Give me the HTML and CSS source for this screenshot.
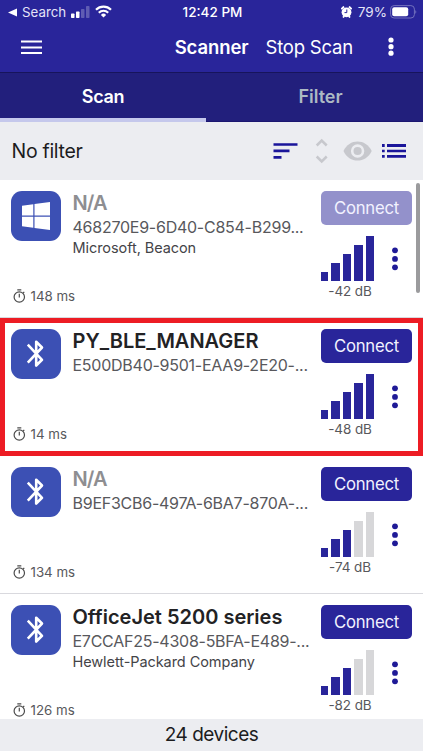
FILE: index.html
```html
<!DOCTYPE html>
<html lang="en">
<head>
<meta charset="utf-8">
<title>Scanner</title>
<link rel="stylesheet" href="styles.css">
</head>
<body>
<svg class="defs" width="0" height="0">
  <symbol id="bt" viewBox="0 0 50 50"><path d="M16.800 15.700 31 30.800 25.200 36.500V12.800L31 18.500 16.800 33.700" fill="none" stroke="#fff" stroke-width="2.600" stroke-linejoin="round"/></symbol>
  <symbol id="win" viewBox="0 0 50 50"><path d="M11 14.700 22.300 13.200V24.500H11ZM23.500 13 39 11V24.500H23.500ZM11 25.700H22.300V36.800L11 35.200ZM23.500 25.700H39V39L23.500 37Z" fill="#fff"/></symbol>
  <symbol id="timer" viewBox="0 0 13 14"><g fill="none" stroke="#4c4c4c" stroke-width="1.200"><circle cx="6.300" cy="8" r="5.200"/><path d="M4.300.9h4M6.300 4.800v3.700M10 4.200l1.300-1.300"/></g></symbol>
  <symbol id="dots" viewBox="0 0 6 24"><circle cx="3" cy="3.300" r="2.900"/><circle cx="3" cy="11.900" r="2.900"/><circle cx="3" cy="20.300" r="2.900"/></symbol>
</svg>
<div class="app">
  <header class="top">
    <div class="status">
      <div class="status-left">
        <svg width="9" height="9" viewBox="0 0 9 9"><path d="M0 4.500 9 .5v8Z" fill="#fff"/></svg>
        <span class="back">Search</span>
        <svg class="cell" width="19" height="12" viewBox="0 0 19 12" fill="#fff"><rect y="7.500" width="3.500" height="4.500" rx=".7"/><rect x="5" y="5.500" width="3.500" height="6.500" rx=".7"/><g opacity=".25"><rect x="10" y="3" width="3.500" height="9" rx=".7"/><rect x="15" width="3.500" height="12" rx=".7"/></g></svg>
        <svg class="wifi" width="17" height="13" viewBox="0 0 17 13"><g fill="none" stroke="#fff" stroke-width="2.200"><path d="M1 4.700a10.700 10.700 0 0 1 15 0M3.800 7.700a6.700 6.700 0 0 1 9.400 0"/></g><path d="M8.500 12.500 5.900 9.900a3.700 3.700 0 0 1 5.200 0Z" fill="#fff"/></svg>
      </div>
      <span class="time">12:42 PM</span>
      <div class="status-right">
        <svg width="11" height="12" viewBox="0 0 11 12"><path d="M.3 3.200 3 .5M10.700 3.200 8 .5M2 11.500l1.300-1.500M9 11.500 7.700 10" stroke="#fff" stroke-width="1.800"/><circle cx="5.500" cy="6.300" r="4.900" fill="#fff"/><path d="M5.800 3.500v3.100H3.500" fill="none" stroke="#29259a"/></svg>
        <span class="pct">79%</span>
        <svg width="27" height="14" viewBox="0 0 27 14"><rect x=".6" y=".6" width="23.800" height="12.400" rx="3.500" fill="none" stroke="#7371bd"/><rect x="2.200" y="2.300" width="16" height="9" rx="2" fill="#fff"/><path d="M25.500 4.700q1.500 2.100 0 4.200Z" fill="#8d8bcd"/></svg>
      </div>
    </div>
    <nav class="nav">
      <svg class="menu" width="21" height="15" viewBox="0 0 21 15" fill="#fff"><path d="M0 .5h21v2H0zM0 6.500h21v2H0zM0 12h21v2H0z"/></svg>
      <span class="title">Scanner</span>
      <span class="stop">Stop Scan</span>
      <svg class="nav-dots" width="6" height="20" viewBox="0 0 6 20" fill="#fff"><circle cx="3" cy="3" r="2.600"/><circle cx="3" cy="9.700" r="2.600"/><circle cx="3" cy="16.200" r="2.600"/></svg>
    </nav>
  </header>
  <div class="tabs"><div class="tab active"><span class="t-scan">Scan</span></div><div class="tab muted"><span class="t-filter">Filter</span></div></div>
  <div class="filterbar">
    <span class="nofilter">No filter</span>
    <svg width="134" height="26" viewBox="0 0 134 26">
      <path d="M.5 5.200h24v2.600H.5zM.5 11.600h16v2.600H.5zM.5 18.100h8v2.600H.5z" fill="#1a159a"/>
      <path d="m43.700 7.500 5-5 5 5M43.700 18.500l5 5 5-5" fill="none" stroke="#c7c8cd" stroke-width="2.500"/>
      <path d="M70.500 13C76 .2 93 .2 98.700 13 93 25.800 76 25.800 70.500 13Z" fill="#c7c8cd"/><circle cx="84.600" cy="13" r="5.400" fill="none" stroke="#ecedf1" stroke-width="2.600"/>
      <path d="M109 6h2.700v3H109zM109 11.700h2.700v2.600H109zM109 17h2.700v2.700H109zM114 6h19v3h-19zM114 11.700h19v2.600h-19zM114 17h19v2.700h-19z" fill="#1a159a"/>
    </svg>
  </div>
  <main class="list">
    <article class="row">
      <svg class="tile"><use href="#win"/></svg>
      <div class="info"><h2 class="name na">N/A</h2><p class="uid">468270E9-6D40-C854-B299...</p><p class="vendor">Microsoft, Beacon</p></div>
      <div class="side"><button class="connect off">Connect</button><div class="signal"><div class="meter"><div class="bars"><i></i><i></i><i></i><i></i><i></i></div><span class="db">-42 dB</span></div><svg class="more"><use href="#dots"/></svg></div></div>
      <div class="age"><svg width="13" height="14"><use href="#timer"/></svg><span>148 ms</span></div>
    </article>
    <article class="row marked">
      <svg class="tile"><use href="#bt"/></svg>
      <div class="info"><h2 class="name">PY_BLE_MANAGER</h2><p class="uid">E500DB40-9501-EAA9-2E20-...</p></div>
      <div class="side"><button class="connect">Connect</button><div class="signal"><div class="meter"><div class="bars"><i></i><i></i><i></i><i></i><i></i></div><span class="db">-48 dB</span></div><svg class="more"><use href="#dots"/></svg></div></div>
      <div class="age"><svg width="13" height="14"><use href="#timer"/></svg><span>14 ms</span></div>
    </article>
    <article class="row">
      <svg class="tile"><use href="#bt"/></svg>
      <div class="info"><h2 class="name na">N/A</h2><p class="uid">B9EF3CB6-497A-6BA7-870A-...</p></div>
      <div class="side"><button class="connect">Connect</button><div class="signal"><div class="meter"><div class="bars weak"><i></i><i></i><i></i><i></i><i></i></div><span class="db">-74 dB</span></div><svg class="more"><use href="#dots"/></svg></div></div>
      <div class="age"><svg width="13" height="14"><use href="#timer"/></svg><span>134 ms</span></div>
    </article>
    <article class="row">
      <svg class="tile"><use href="#bt"/></svg>
      <div class="info"><h2 class="name">OfficeJet 5200 series</h2><p class="uid">E7CCAF25-4308-5BFA-E489-...</p><p class="vendor">Hewlett-Packard Company</p></div>
      <div class="side"><button class="connect">Connect</button><div class="signal"><div class="meter"><div class="bars weak"><i></i><i></i><i></i><i></i><i></i></div><span class="db">-82 dB</span></div><svg class="more"><use href="#dots"/></svg></div></div>
      <div class="age"><svg width="13" height="14"><use href="#timer"/></svg><span>126 ms</span></div>
    </article>
    <div class="scrollbar"></div>
  </main>
  <footer class="footer"><span>24 devices</span></footer>
</div>
</body>
</html>
```
FILE: styles.css
```css
* { box-sizing: border-box; margin: 0; padding: 0; }
body { font-family: Inter, "Liberation Sans", sans-serif; background: #fff; color: #1c1c1e; }
svg { display: block; flex: none; }
span, h2, p { white-space: nowrap; }
.defs { position: absolute; }
.app { width: 423px; height: 751px; overflow: hidden; display: flex; flex-direction: column; }
.top { height: 72px; flex: none; background: #29259a; color: #fff; }
.status { height: 24px; display: grid; grid-template-columns: 1fr auto 1fr; align-items: center; padding: 0 6px 0 8px; font-size: 14px; line-height: 24px; }
.status-left, .status-right { display: flex; align-items: center; }
.status-right { justify-content: flex-end; }
.back { margin-left: 5px; width: 44px; font-size: 13.300px; color: #e4e4f8; }
.cell { margin-left: 5px; margin-top: -1px; }
.wifi { margin-left: 5px; margin-top: -1px; }
.time { font-weight: 500; font-size: 13.500px; }
.pct { margin: 0 3px 0 6px; font-size: 13.500px; color: #e4e4f8; }
.nav { height: 48px; display: flex; align-items: center; padding: 0 29px 2px 21px; font-size: 18.500px; }
.title { margin-left: auto; font-weight: 600; letter-spacing: -.1px; }
.stop { margin-left: 17px; letter-spacing: -.2px; }
.nav-dots { margin-left: 35px; }
.tabs { height: 50px; flex: none; display: flex; border-top: 1px solid #17145c; background: #221f7c; color: #fff; font-size: 18px; font-weight: 600; }
.tab { width: 217px; display: flex; justify-content: center; line-height: 48px; border-bottom: 1px solid #1b1670; }
.active { width: 206px; border-bottom: 4px solid #c5c8ec; }
.t-scan { letter-spacing: -.3px; }
.muted { color: #adb9c4; padding-right: 0; flex: 1; padding-left: 12px; }
.filterbar { height: 58px; flex: none; display: flex; align-items: center; justify-content: space-between; padding: 0 16px 0 11.500px; background: #ecedf1; font-size: 19.500px; }
.nofilter { letter-spacing: -.3px; }
.list { height: 539px; flex: none; overflow: hidden; position: relative; }
.row { height: 138px; display: grid; grid-template-columns: 50px 1fr 91px; grid-template-rows: 100px 27px; column-gap: 11px; padding: 11px 11px 0; border-bottom: 1px solid #d9d9de; }
.marked { padding: 6px 6px 0; border: 5px solid #ed1c24; }
.tile { width: 50px; height: 50px; border-radius: 11px; background: #3c50b4; }
.info { min-width: 0; padding: 1px 0 0 .5px; color: #58585c; }
.name { font-size: 20px; line-height: 23px; font-weight: 600; color: #222224; }
.name.na { color: #8e8e91; letter-spacing: -.9px; }
.uid { font-size: 16px; line-height: 24px; letter-spacing: -.25px; }
.vendor { font-size: 14.500px; line-height: 18px; letter-spacing: -.07px; color: #444448; }
.side { min-width: 0; }
.connect { display: block; width: 91px; height: 34px; border: 0; border-radius: 5px; background: #29259a; color: #f2f2ff; font: 16.700px Inter, "Liberation Sans", sans-serif; letter-spacing: -.25px; }
.connect.off { background: #9391cb; }
.signal { display: flex; padding-top: 11px; }
.meter { width: 58px; }
.bars { display: flex; align-items: flex-end; gap: 3px; height: 45px; width: 53px; }
.bars i { flex: 1; background: #29259a; }
.bars i:nth-child(1) { height: 20%; flex: .85; }
.bars i:nth-child(2) { height: 40%; }
.bars i:nth-child(3) { height: 60%; }
.bars i:nth-child(4) { height: 80%; }
.bars i:nth-child(5) { height: 100%; }
.bars.weak i:nth-child(n+4) { background: #d7d7d9; }
.db { display: block; text-align: center; font-size: 13.500px; line-height: 20px; letter-spacing: -.1px; color: #58585c; }
.more { width: 6px; height: 24px; margin: 10.500px 0 0 13px; fill: #1f1a97; }
.age { grid-column: 1 / 4; display: flex; align-items: flex-start; gap: 5px; margin: -2px 0 0 1.500px; color: #58585c; font-size: 13.300px; line-height: 15px; }
.scrollbar { position: absolute; right: 3px; top: 3px; width: 4px; height: 110px; border-radius: 2px; background: #9b9b9d; }
.footer { height: 32px; flex: none; background: #ecedf1; text-align: center; font-size: 19px; line-height: 32px; letter-spacing: -.5px; }
```
